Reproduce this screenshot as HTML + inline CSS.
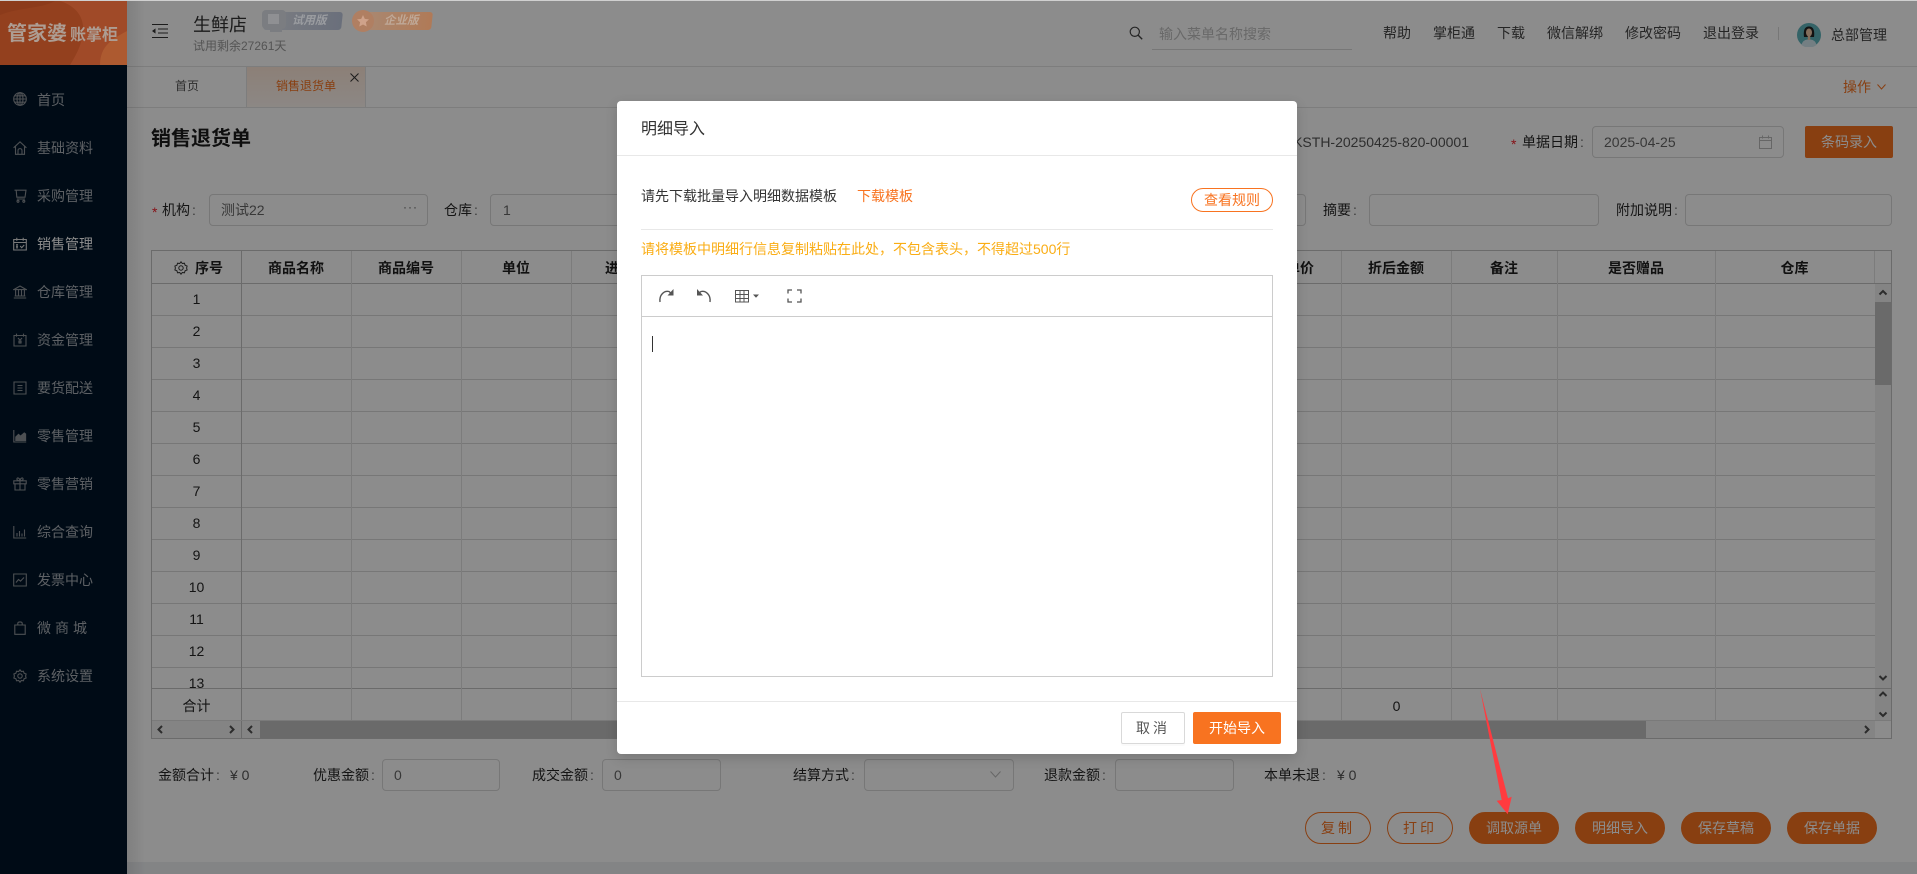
<!DOCTYPE html>
<html lang="zh-CN"><head><meta charset="utf-8"><title>销售退货单</title>
<style>
*{box-sizing:border-box}
html,body{margin:0;padding:0;width:1917px;height:874px;overflow:hidden;background:#fff}
body{position:relative;font:14px/20px "Liberation Sans","Noto Sans CJK SC",sans-serif;color:rgba(0,0,0,.85)}
div,span.a,svg.a{position:absolute}
.t{position:absolute;white-space:nowrap;line-height:20px}
.t i{font-style:normal;margin-left:2px;color:#666}
.h{color:#444}
.box{position:absolute;border:1px solid #d9d9d9;border-radius:4px;background:#fff}
.nav{position:absolute;left:37px;white-space:nowrap;color:#aab0b6;line-height:20px}
.ic{position:absolute;left:13px;width:14px;height:14px;fill:none;stroke:#8c9298;stroke-width:1.1}
.v{position:absolute;top:251px;height:469px;width:1px;background:#e2e2e2}
.hd{position:absolute;top:258px;line-height:20px;text-align:center;font-weight:bold;color:#1f1f1f;white-space:nowrap}
.n{position:absolute;left:152px;width:89px;text-align:center;line-height:20px;color:#262626}
.pill{position:absolute;top:812px;height:32px;border-radius:16px;line-height:30px;text-align:center;font-size:14px;border:1px solid #f87320;background:#f87320;color:#fff}
.pill.o{background:#fff;color:#f87320}
.red{color:#f5222d}
</style></head><body>

<!-- base page -->
<div style="left:0;top:0;width:127px;height:874px;background:#001529"></div>
<div style="left:127px;top:0;width:18px;height:874px;background:linear-gradient(90deg,rgba(0,0,0,.09),rgba(0,0,0,0));z-index:3"></div>
<div style="left:127px;top:862px;width:1790px;height:12px;background:#eef0f3"></div>
<div style="left:127px;top:66px;width:1790px;height:1px;background:#e4e4e4"></div>
<div style="left:127px;top:107px;width:1790px;height:1px;background:#e4e4e4"></div>

<!-- sidebar items -->
<svg class="ic" style="top:92px" viewBox="0 0 14 14"><circle cx="7" cy="7" r="6.3"/><ellipse cx="7" cy="7" rx="3" ry="6.3"/><path d="M.7 7h12.600M1.600 3.800h10.800M1.600 10.200h10.800M7 .7v12.600"/></svg><span class="nav" style="top:90px">首页</span>
<svg class="ic" style="top:141px" viewBox="0 0 14 14"><path d="M.6 6.800 7 .9l6.400 5.900M2.500 5.400v7.900h9V5.400M5 13.300V9.500C5 7 9 7 9 9.500v3.800"/></svg><span class="nav" style="top:138px">基础资料</span>
<svg class="ic" style="top:189px" viewBox="0 0 14 14"><path d="M1.500 1.200h11.500l-1 7H3.800l-.6-7M3.800 10h8.200"/><circle cx="5" cy="12.300" r="1"/><circle cx="10.800" cy="12.300" r="1"/></svg><span class="nav" style="top:186px">采购管理</span>
<svg class="ic" style="top:237px;stroke:#ddd" viewBox="0 0 14 14"><path d="M.7 2.500h12.600v10.500H.7zM.7 5.500h12.600M3.800.8v3M10.200.8v3M3 7.800h2M3 9.300h2M3 10.800h2M7.200 9l1.500 1.700L11.200 8"/></svg><span class="nav" style="top:234px;color:#fff">销售管理</span>
<svg class="ic" style="top:285px" viewBox="0 0 14 14"><path d="M.8 4.600 7 1l6.200 3.600zM.8 13h12.400M2.600 4.800V11M5.500 4.800V11M8.500 4.800V11M11.400 4.800V11M1.600 11h10.800"/></svg><span class="nav" style="top:282px">仓库管理</span>
<svg class="ic" style="top:333px" viewBox="0 0 14 14"><path d="M1 2.500h12V13H1zM3.500.6v3M10.500.6v3M5 5l2 2.200L9 5M7 7.200v3.600M5.200 8.200h3.600M5.200 9.800h3.600"/></svg><span class="nav" style="top:330px">资金管理</span>
<svg class="ic" style="top:381px" viewBox="0 0 14 14"><path d="M1 1h12v12H1zM4.500 4.500h5M4.500 7h5M4.500 9.500h5"/></svg><span class="nav" style="top:378px">要货配送</span>
<svg class="ic" style="top:429px" viewBox="0 0 14 14"><path d="M.8 1v12h12.400"/><path d="M2.800 8 5.500 5.400l2 1.800 3.800-3.200 1.300 1V11.400H2.800z" fill="#8c9298"/></svg><span class="nav" style="top:426px">零售管理</span>
<svg class="ic" style="top:477px" viewBox="0 0 14 14"><path d="M.8 3.800h12.400v3H.8zM2 6.800V13h10V6.800M7 3.800V13M7 3.800C5 3.800 3.500 3 4 1.600s2.600-.6 3 2.200c.4-2.800 2.500-3.600 3-2.200s-1 2.200-3 2.200"/></svg><span class="nav" style="top:474px">零售营销</span>
<svg class="ic" style="top:525px" viewBox="0 0 14 14"><path d="M.8 1v12h12.400M4 11.500V8M6.500 11.500V6M9 11.500V8.500M11.500 11.500V4.500"/></svg><span class="nav" style="top:522px">综合查询</span>
<svg class="ic" style="top:573px" viewBox="0 0 14 14"><path d="M.7 1h12.600v12H.7zM3 9.500l2.500-3 2 1.600L11 4.500"/></svg><span class="nav" style="top:570px">发票中心</span>
<svg class="ic" style="top:621px" viewBox="0 0 14 14"><path d="M1.800 4h10.400v9.300H1.800zM4.800 4V2.400C4.800 .4 9.200 .4 9.200 2.400V4"/></svg><span class="nav" style="top:618px;letter-spacing:4px">微商城</span>
<svg class="ic" style="top:669px" viewBox="0 0 14 14"><path d="M7 .8l1.300 1.700 2.100-.3.700 2 2 .8-.5 2 .5 2-2 .8-.7 2-2.100-.3L7 13.200l-1.300-1.700-2.100.3-.7-2-2-.8.500-2-.500-2 2-.8.700-2 2.100.3z"/><circle cx="7" cy="7" r="2.200"/></svg><span class="nav" style="top:666px">系统设置</span>

<!-- header -->
<svg class="a" style="left:152px;top:24px" width="16" height="14" viewBox="0 0 16 14"><path d="M0 .5h16M6 5h10M6 9h10M0 13.500h16" stroke="#333" stroke-width="1.100" fill="none"/><path d="M0 7l3.500-2.600v5.200z" fill="#333"/></svg>
<span class="t" style="left:193px;top:15px;font-size:18px;color:#333">生鲜店</span>
<span class="t" style="left:193px;top:36px;font-size:12px;color:#999">试用剩余27261天</span>
<svg class="a" style="left:1129px;top:26px" width="14" height="14" viewBox="0 0 14 14"><circle cx="5.800" cy="5.800" r="4.600" fill="none" stroke="#444" stroke-width="1.200"/><path d="M9.200 9.200l4 4" stroke="#444" stroke-width="1.400"/></svg>
<span class="t" style="left:1159px;top:24px;color:#bfbfbf">输入菜单名称搜索</span>
<div style="left:1152px;top:49px;width:200px;height:1px;background:#d9d9d9"></div>
<span class="t h" style="left:1383px;top:23px">帮助</span>
<span class="t h" style="left:1433px;top:23px">掌柜通</span>
<span class="t h" style="left:1497px;top:23px">下载</span>
<span class="t h" style="left:1547px;top:23px">微信解绑</span>
<span class="t h" style="left:1625px;top:23px">修改密码</span>
<span class="t h" style="left:1703px;top:23px">退出登录</span>
<div style="left:1778px;top:27px;width:1px;height:13px;background:#d9d9d9"></div>
<svg class="a" style="left:1797px;top:23px" width="24" height="24" viewBox="0 0 24 24"><circle cx="12" cy="12" r="12" fill="#5fb4bc"/><path d="M7 14C6 6 8.500 3.500 12 3.500S18 6 17 14z" fill="#222"/><ellipse cx="12" cy="9.500" rx="3" ry="4" fill="#f0c8a8"/><path d="M4.500 22c1-4.500 4-5.500 7.500-5.500s6.500 1 7.500 5.500A12 12 0 0 1 4.500 22z" fill="#d3e8ee"/><rect x="10.800" y="12.500" width="2.400" height="4.500" fill="#f0c8a8"/></svg>
<span class="t" style="left:1831px;top:25px;color:#444">总部管理</span>

<!-- tabs -->
<div style="left:246px;top:67px;width:1px;height:40px;background:#e4e4e4"></div>
<div style="left:247px;top:67px;width:118px;height:40px;background:linear-gradient(180deg,#ffe9d9,#fff7f2)"></div>
<div style="left:365px;top:67px;width:1px;height:40px;background:#e4e4e4"></div>
<span class="t" style="left:175px;top:76px;font-size:12px;color:#555">首页</span>
<span class="t" style="left:276px;top:76px;font-size:12px;color:#f87320">销售退货单</span>
<svg class="a" style="left:350px;top:73px" width="9" height="9" viewBox="0 0 9 9"><path d="M.5.500l8 8M8.500.500l-8 8" stroke="#333" fill="none"/></svg>
<span class="t" style="left:1843px;top:77px;color:#f87320">操作</span>
<svg class="a" style="left:1877px;top:84px" width="9" height="6" viewBox="0 0 9 6"><path d="M.5.500 4.500 5l4-4.500" stroke="#f87320" fill="none"/></svg>

<!-- title row -->
<span class="t" style="left:151px;top:127px;font-size:20px;line-height:24px;font-weight:bold;color:#1c1c1c">销售退货单</span>
<span class="t" style="right:448px;top:132px;color:#555">XKSTH-20250425-820-00001</span>
<span class="t red" style="left:1511px;top:134px">*</span>
<span class="t" style="left:1522px;top:132px">单据日期<i>:</i></span>
<div class="box" style="left:1592px;top:126px;width:192px;height:32px"></div>
<span class="t" style="left:1604px;top:132px;color:#666">2025-04-25</span>
<svg class="a" style="left:1759px;top:135px" width="13" height="14" viewBox="0 0 13 14"><path d="M.5 2.500h12v11H.5zM.5 5.500h12M3.500.5v3M9.500.5v3" stroke="#bbb" fill="none"/></svg>
<div style="left:1805px;top:126px;width:88px;height:32px;border-radius:2px;background:#f87320;color:#fff;text-align:center;line-height:32px">条码录入</div>

<!-- form row -->
<span class="t red" style="left:152px;top:202px">*</span>
<span class="t" style="left:162px;top:200px">机构<i>:</i></span>
<div class="box" style="left:209px;top:194px;width:219px;height:32px"></div>
<span class="t" style="left:221px;top:200px;color:#666">测试22</span>
<span class="t" style="left:403px;top:197px;color:#666;letter-spacing:1px;font-size:12px">···</span>
<span class="t" style="left:444px;top:200px">仓库<i>:</i></span>
<div class="box" style="left:490px;top:194px;width:816px;height:32px"></div>
<span class="t" style="left:503px;top:200px;color:#666">1</span>
<span class="t" style="left:1323px;top:200px">摘要<i>:</i></span>
<div class="box" style="left:1369px;top:194px;width:230px;height:32px"></div>
<span class="t" style="left:1616px;top:200px">附加说明<i>:</i></span>
<div class="box" style="left:1685px;top:194px;width:207px;height:32px"></div>

<!-- table -->
<div style="left:151px;top:250px;width:1741px;height:489px;border:1px solid #c4c4c4;background:#fff"></div>
<div style="left:152px;top:283px;width:1723px;height:405px;background:repeating-linear-gradient(180deg,#d9d9d9 0,#d9d9d9 1px,transparent 1px,transparent 32px)"></div>
<div style="left:152px;top:688px;width:1739px;height:1px;background:#c4c4c4"></div>
<div style="left:152px;top:283px;width:1739px;height:1px;background:#c4c4c4"></div>
<div class="v" style="left:351px"></div><div class="v" style="left:461px"></div><div class="v" style="left:571px"></div><div class="v" style="left:1341px"></div><div class="v" style="left:1451px"></div><div class="v" style="left:1557px"></div><div class="v" style="left:1715px"></div><div class="v" style="left:1874px;height:32px"></div>
<div class="v" style="left:241px;height:487px;background:#c4c4c4"></div>

<svg class="a" style="left:174px;top:261px" width="14" height="14" viewBox="0 0 14 14"><path d="M7 .8l1.300 1.700 2.100-.3.700 2 2 .8-.5 2 .5 2-2 .8-.7 2-2.100-.3L7 13.200l-1.300-1.700-2.100.3-.7-2-2-.8.500-2-.500-2 2-.8.700-2 2.100.3z" fill="none" stroke="#333"/><circle cx="7" cy="7" r="2.200" fill="none" stroke="#333"/></svg>
<span class="hd" style="left:195px">序号</span>
<span class="hd" style="left:241px;width:110px">商品名称</span>
<span class="hd" style="left:351px;width:110px">商品编号</span>
<span class="hd" style="left:461px;width:110px">单位</span>
<span class="hd" style="left:571px;width:110px">进货价</span>
<span class="hd" style="left:1231px;width:110px">折后单价</span>
<span class="hd" style="left:1341px;width:110px">折后金额</span>
<span class="hd" style="left:1451px;width:106px">备注</span>
<span class="hd" style="left:1557px;width:158px">是否赠品</span>
<span class="hd" style="left:1715px;width:159px">仓库</span>

<span class="n" style="top:289px">1</span><span class="n" style="top:321px">2</span><span class="n" style="top:353px">3</span><span class="n" style="top:385px">4</span><span class="n" style="top:417px">5</span><span class="n" style="top:449px">6</span><span class="n" style="top:481px">7</span><span class="n" style="top:513px">8</span><span class="n" style="top:545px">9</span><span class="n" style="top:577px">10</span><span class="n" style="top:609px">11</span><span class="n" style="top:641px">12</span><span class="n" style="top:673px;height:15px;overflow:hidden">13</span>
<span class="n" style="top:696px">合计</span>
<span class="n" style="top:696px;left:1341px;width:111px">0</span>

<!-- vertical scrollbar -->
<div style="left:1875px;top:284px;width:16px;height:404px;background:#f1f1f1"></div>
<div style="left:1875px;top:302px;width:16px;height:83px;background:#c1c1c1"></div>
<div style="left:1875px;top:689px;width:16px;height:31px;background:#f1f1f1"></div>
<svg class="a" style="left:1875px;top:284px" width="16" height="436" viewBox="0 0 16 436" fill="none" stroke="#505050" stroke-width="2"><path d="M4.500 10.500 8 7l3.500 3.500M4.500 392 8 395.500 11.500 392M4.500 412 8 408.500 11.500 412M4.500 428.500 8 432 11.500 428.500"/></svg>
<!-- horizontal scrollbars -->
<div style="left:152px;top:720px;width:1723px;height:18px;background:#f1f1f1"></div>
<div style="left:241px;top:720px;width:1px;height:18px;background:#c4c4c4"></div>
<div style="left:260px;top:721px;width:1386px;height:17px;background:#c1c1c1"></div>
<div style="left:152px;top:720px;width:1739px;height:1px;background:#dfdfdf"></div>
<svg class="a" style="left:152px;top:721px" width="1723" height="17" viewBox="0 0 1723 17" fill="none" stroke="#505050" stroke-width="2"><path d="M10 5 6.500 8.500 10 12M78 5l3.500 3.500L78 12M100 5l-3.500 3.500L100 12M1713 5l3.500 3.500-3.500 3.500"/></svg>

<!-- totals -->
<span class="t" style="left:158px;top:765px">金额合计<i>:</i></span>
<span class="t" style="left:230px;top:765px;color:#555">¥ 0</span>
<span class="t" style="left:313px;top:765px">优惠金额<i>:</i></span>
<div class="box" style="left:382px;top:759px;width:118px;height:32px"></div>
<span class="t" style="left:394px;top:765px;color:#666">0</span>
<span class="t" style="left:532px;top:765px">成交金额<i>:</i></span>
<div class="box" style="left:602px;top:759px;width:119px;height:32px"></div>
<span class="t" style="left:614px;top:765px;color:#666">0</span>
<span class="t" style="left:793px;top:765px">结算方式<i>:</i></span>
<div class="box" style="left:864px;top:759px;width:150px;height:32px"></div>
<svg class="a" style="left:990px;top:771px" width="11" height="7" viewBox="0 0 11 7"><path d="M.5.500 5.500 6l5-5.500" stroke="#bbb" fill="none"/></svg>
<span class="t" style="left:1044px;top:765px">退款金额<i>:</i></span>
<div class="box" style="left:1115px;top:759px;width:119px;height:32px"></div>
<span class="t" style="left:1264px;top:765px">本单未退<i>:</i></span>
<span class="t" style="left:1337px;top:765px;color:#555">¥ 0</span>

<!-- buttons -->
<div class="pill o" style="left:1305px;width:66px;letter-spacing:3px">复制</div>
<div class="pill o" style="left:1387px;width:66px;letter-spacing:3px">打印</div>
<div class="pill" style="left:1469px;width:90px">调取源单</div>
<div class="pill" style="left:1575px;width:90px">明细导入</div>
<div class="pill" style="left:1681px;width:90px">保存草稿</div>
<div class="pill" style="left:1787px;width:90px">保存单据</div>

<!-- overlay -->
<div style="left:0;top:0;width:1917px;height:874px;background:rgba(0,0,0,.45);z-index:10"></div>
<div style="left:0;top:0;width:1917px;height:1px;background:#d0d0d0;z-index:11"></div>

<!-- logo (final colours) -->
<div style="left:0;top:1px;width:127px;height:64px;background:#93401e;overflow:hidden;z-index:11">
<svg class="a" style="left:0;top:0" width="127" height="64" viewBox="0 0 127 64"><path d="M60 0C85 8 92 30 70 64H127V0z" fill="#a04a28"/><path d="M100 64C100 45 112 38 127 30V64z" fill="#ad5a30"/><path d="M0 0V14C20 6 40 8 55 0z" fill="#8c3b1b"/></svg>
<span class="t" style="left:7px;top:21px;font-size:20px;line-height:24px;font-weight:bold;color:#ad9d93">管家婆</span>
<span class="t" style="left:70px;top:24px;font-size:16px;line-height:22px;font-weight:bold;color:#ad9d93">账掌柜</span>
</div>

<!-- badges (final colours) -->
<div style="left:264px;top:12px;width:78px;height:18px;background:linear-gradient(90deg,#7c7e83,#6a6f7b);transform:skewX(-6deg);border-radius:3px;z-index:11"></div>
<div style="left:262px;top:10px;width:24px;height:19px;background:#7b7d81;border-radius:4px;z-index:11"></div>
<div style="left:268px;top:14px;width:11px;height:10px;background:#8f9093;z-index:11"></div>
<div style="left:270px;top:29px;width:12px;height:3px;background:#7b7d81;z-index:11"></div>
<span class="t" style="left:292px;top:11px;font-size:11.500px;font-weight:bold;font-style:italic;color:#9a9ca0;z-index:12">试用版</span>
<div style="left:356px;top:12px;width:76px;height:18px;background:linear-gradient(90deg,#a88a75,#b07a57);transform:skewX(-6deg);border-radius:3px;z-index:11"></div>
<div style="left:352px;top:10px;width:22px;height:22px;background:#b07f62;border-radius:50%;z-index:11"></div>
<svg class="a" style="left:356px;top:14px;z-index:12" width="14" height="14" viewBox="0 0 14 14"><path d="M7 1l1.800 3.900 4.200.5-3.100 2.900.8 4.200L7 10.500l-3.700 2 .8-4.200L1 5.400l4.200-.5z" fill="#cfa28a"/></svg>
<span class="t" style="left:384px;top:11px;font-size:11.500px;font-weight:bold;font-style:italic;color:#bfa897;z-index:12">企业版</span>

<!-- modal -->
<div style="left:617px;top:101px;width:680px;height:653px;background:#fff;border-radius:4px;box-shadow:0 4px 12px rgba(0,0,0,.15);z-index:20">
 <span class="t" style="left:24px;top:18px;font-size:16px;line-height:22px;color:#333">明细导入</span>
 <div style="left:0;top:54px;width:680px;height:1px;background:#e8e8e8"></div>
 <span class="t" style="left:24px;top:85px;color:#333">请先下载批量导入明细数据模板</span>
 <span class="t" style="left:240px;top:85px;color:#f87320">下载模板</span>
 <div style="left:574px;top:87px;width:82px;height:24px;border:1px solid #f87320;border-radius:12px;color:#f87320;text-align:center;line-height:22px">查看规则</div>
 <div style="left:24px;top:128px;width:632px;height:1px;background:#e8e8e8"></div>
 <span class="t" style="left:24px;top:138px;color:#faad14">请将模板中明细行信息复制粘贴在此处，不包含表头，不得超过500行</span>
 <div style="left:24px;top:174px;width:632px;height:402px;border:1px solid #ccc;background:#fff"></div>
 <div style="left:25px;top:215px;width:630px;height:1px;background:#ccc"></div>
 <svg class="a" style="left:23px;top:169px" width="200" height="90" viewBox="0 0 200 90" fill="none" stroke="#555" stroke-width="1.400">
  <path d="M20 32C19 25 24 20.500 29 21.500L32 24"/><path d="M33.500 19v6.500H27.500z" fill="#555" stroke="none"/>
  <path d="M70 32C71 25 66 20.500 61 21.500L58 24"/><path d="M57 19v6.500h6z" fill="#555" stroke="none"/>
  <path d="M95.500 20.500h13v11.500h-13zM95.500 24.500h13M95.500 28.500h13M100 20.500v11.500M104 20.500v11.500" stroke-width="1"/>
  <path d="M113 24.500h6l-3 3.200z" fill="#555" stroke="none"/>
  <path d="M148 23.500V20h4M157 20h4v3.500M148 28.500V32h4M157 32h4v-3.500" stroke-width="1.300"/>
  <path d="M12.500 66v16" stroke="#333" stroke-width="1"/>
 </svg>
 <div style="left:0;top:600px;width:680px;height:1px;background:#e8e8e8"></div>
 <div style="left:504px;top:611px;width:64px;height:32px;border:1px solid #d9d9d9;border-radius:2px;text-align:center;line-height:30px;color:#555;letter-spacing:3px;box-shadow:0 2px 0 rgba(0,0,0,.02)">取消</div>
 <div style="left:576px;top:611px;width:88px;height:32px;border-radius:2px;background:#f87320;color:#fff;text-align:center;line-height:32px">开始导入</div>
</div>

<!-- annotation arrow -->
<svg class="a" style="left:0;top:0;z-index:30" width="1917" height="874" viewBox="0 0 1917 874"><path d="M1480 689 1501.700 800 1496.700 800.700 1507.700 814.300 1511.700 796.700 1508 798.300z" fill="#ff3b3f"/></svg>
</body></html>
